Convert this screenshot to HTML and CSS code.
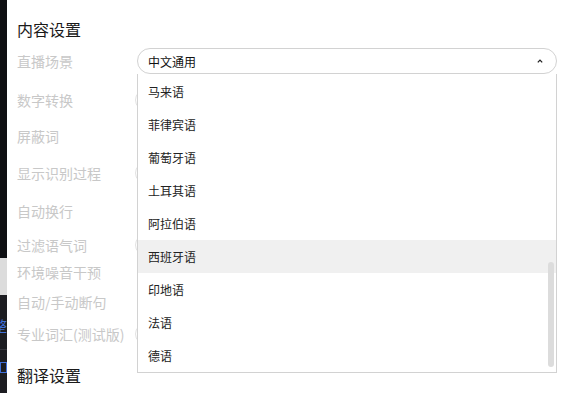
FILE: index.html
```html
<!DOCTYPE html>
<html lang="zh-CN">
<head>
  <meta charset="UTF-8" />
  <meta name="viewport" content="width=device-width, initial-scale=1.0"/>
  <title>内容设置</title>
  <link rel="stylesheet" href="styles.css">
</head>
<body>
  <div class="page">
    <aside class="side">
      <div class="side-top"></div>
      <div class="side-light"></div>
      <div class="side-bottom">
        <span class="side-word">调整</span>
        <div class="side-rule"></div>
        <span class="side-box"></span>
      </div>
    </aside>

    <main class="settings">
      <h2 class="section-title">内容设置</h2>

      <div class="row row-select">
        <span class="label">直播场景</span>
        <div class="select">
          <span class="select-value">中文通用</span>
          <svg class="chevron" viewBox="0 0 6 4"><path d="M0.8 3.4 L3 1.1 L5.2 3.4" /></svg>
          <ul class="dropdown">
            <li class="option">马来语</li>
            <li class="option">菲律宾语</li>
            <li class="option">葡萄牙语</li>
            <li class="option">土耳其语</li>
            <li class="option">阿拉伯语</li>
            <li class="option active">西班牙语</li>
            <li class="option">印地语</li>
            <li class="option">法语</li>
            <li class="option">德语</li>
            <li class="scroll-thumb"></li>
          </ul>
        </div>
      </div>

      <div class="row sp-14">
        <span class="label">数字转换</span>
        <span class="toggle"></span>
      </div>
      <div class="row sp-12">
        <span class="label">屏蔽词</span>
      </div>
      <div class="row sp-13">
        <span class="label">显示识别过程</span>
        <span class="toggle"></span>
      </div>
      <div class="row sp-14">
        <span class="label">自动换行</span>
      </div>
      <div class="row sp-10">
        <span class="label">过滤语气词</span>
        <span class="toggle"></span>
      </div>
      <div class="row sp-3">
        <span class="label">环境噪音干预</span>
      </div>
      <div class="row sp-6">
        <span class="label">自动/手动断句</span>
      </div>
      <div class="row sp-8">
        <span class="label">专业词汇(测试版)</span>
        <span class="toggle"></span>
      </div>

      <h2 class="section-title next">翻译设置</h2>
    </main>
  </div>
</body>
</html>
```

FILE: styles.css
```css
* {
  box-sizing: border-box;
}

body {
  margin: 0;
  font-family: "Microsoft YaHei", "Noto Sans CJK SC", sans-serif;
  background: #fff;
}

.page {
  display: flex;
  height: 393px;
  overflow: hidden;
}

/* dark window edge on the left */
.side {
  width: 7px;
  flex-shrink: 0;
  display: flex;
  flex-direction: column;
}

.side-top {
  height: 258px;
  background: #0e0f12;
}

.side-light {
  height: 37px;
  background: #dcdcdc;
}

.side-bottom {
  flex: 1;
  background: #1c1d21;
  display: flex;
  flex-direction: column;
  align-items: flex-end;
  overflow: hidden;
}

.side-word {
  margin-top: 21px;
  font-size: 14px;
  line-height: 18px;
  color: #3f6fd8;
  white-space: nowrap;
}

.side-rule {
  width: 7px;
  height: 1px;
  margin-top: 15px;
  background: #34353b;
}

.side-box {
  align-self: flex-start;
  width: 7px;
  height: 11px;
  margin-top: 12px;
  border: 1px solid #3f6fd8;
}

/* settings panel */
.settings {
  flex: 1;
  padding-left: 10px;
}

.section-title {
  margin: 0;
  padding-top: 18px;
  font-size: 16px;
  line-height: 22px;
  font-weight: normal;
  color: #1a1a1a;
}

.section-title.next {
  padding-top: 0;
  margin-top: 18px;
}

.row {
  display: grid;
  grid-template-columns: 120px 420px;
  align-items: center;
  height: 24px;
}

.row-select {
  height: 26px;
  margin-top: 8px;
}

.sp-3 { margin-top: 3px; }
.sp-6 { margin-top: 6px; }
.sp-8 { margin-top: 8px; }
.sp-10 { margin-top: 10px; }
.sp-12 { margin-top: 12px; }
.sp-13 { margin-top: 13px; }
.sp-14 { margin-top: 14px; }

.label {
  font-size: 14px;
  line-height: 24px;
  color: #c8c8c8;
  white-space: nowrap;
}

.toggle {
  width: 40px;
  height: 22px;
  margin-left: -2px;
  border: 1px solid #e2e2e2;
  border-radius: 11px;
}

.select {
  position: relative;
  height: 26px;
  display: flex;
  align-items: center;
  justify-content: space-between;
  padding: 0 13px 0 10px;
  border: 1px solid #d2d2d2;
  border-radius: 13px;
  background: #fff;
}

.select-value {
  font-size: 12px;
  color: #111;
}

.chevron {
  width: 6px;
  height: 4px;
}

.chevron path {
  fill: none;
  stroke: #222;
  stroke-width: 1.3;
}

.dropdown {
  position: absolute;
  top: 25px;
  left: -1px;
  z-index: 2;
  width: 420px;
  height: 299px;
  margin: 0;
  padding: 1px 0 0;
  list-style: none;
  background: #fff;
  border: 1px solid #d2d2d2;
  border-top: none;
  overflow: hidden;
}

.option {
  height: 33px;
  padding-left: 10px;
  font-size: 12px;
  line-height: 33px;
  color: #222;
}

.option.active {
  background: #f0f0f0;
}

.scroll-thumb {
  position: absolute;
  top: 188px;
  right: 2px;
  width: 6px;
  height: 105px;
  border-radius: 3px;
  background: #dcdcdc;
}
```
